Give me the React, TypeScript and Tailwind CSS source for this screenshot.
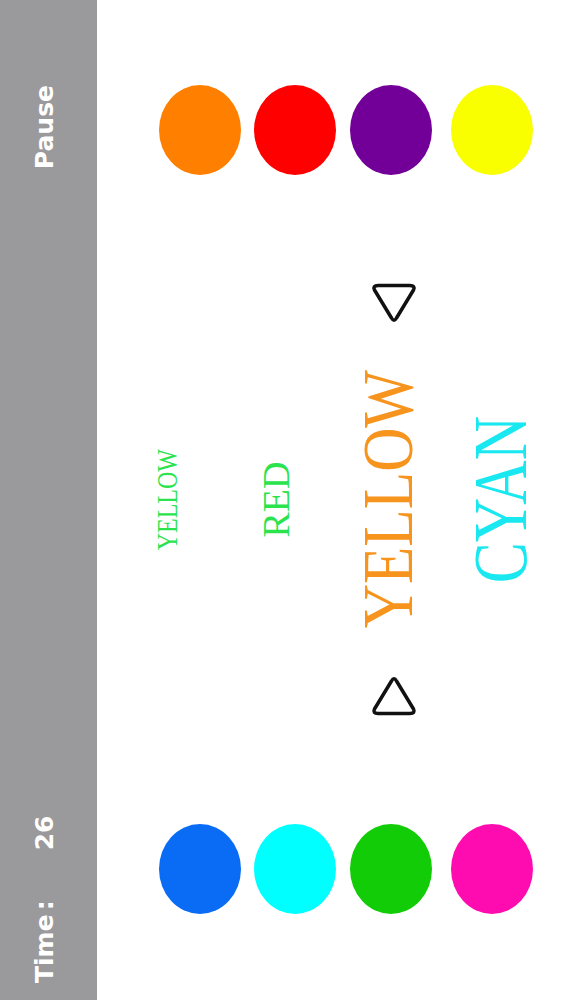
import React from 'react';

// The game is drawn in landscape (1000x563) and turned a quarter turn to fit the portrait window.

const leftDots = [
  { color: 'bg-[#0a6cf5]', mt: 'mt-0' },
  { color: 'bg-[#00ffff]', mt: 'mt-[13px]' },
  { color: 'bg-[#12cc08]', mt: 'mt-[14px]' },
  { color: 'bg-[#ff0cb0]', mt: 'mt-[19px]' },
];

const rightDots = [
  { color: 'bg-[#ff8000]', mt: 'mt-0' },
  { color: 'bg-[#ff0000]', mt: 'mt-[13px]' },
  { color: 'bg-[#720098]', mt: 'mt-[14px]' },
  { color: 'bg-[#faff00]', mt: 'mt-[19px]' },
];

const DotColumn = ({ dots }: { dots: { color: string; mt: string }[] }) => (
  <div className="flex flex-col pt-[62px] w-[90px] flex-shrink-0">
    {dots.map((d, i) => (
      <div key={i} className={`w-[90px] h-[82px] rounded-[50%] ${d.color} ${d.mt}`} />
    ))}
  </div>
);

const Arrow = ({ dir }: { dir: 'right' | 'left' }) => (
  <svg width="42" height="48" viewBox="0 0 42 48" className="mt-[18px] flex-shrink-0">
    <path
      d={
        dir === 'right'
          ? 'M 2.5 8 Q 2.5 2.5 7 4.5 L 35 21.5 Q 39.5 24 35 26.5 L 7 43.5 Q 2.5 45.5 2.5 40 Z'
          : 'M 39.5 8 Q 39.5 2.5 35 4.5 L 7 21.5 Q 2.5 24 7 26.5 L 35 43.5 Q 39.5 45.5 39.5 40 Z'
      }
      fill="none"
      stroke="#111"
      strokeWidth="3.5"
      strokeLinejoin="round"
    />
  </svg>
);

export default function App() {
  return (
    <div className="relative w-[563px] h-[1000px] overflow-hidden bg-white">
      <div className="w-[1000px] h-[563px] origin-top-left [transform:translateY(1000px)_rotate(-90deg)] flex flex-col bg-white">
        {/* Top bar */}
        <div className="h-[97px] flex-shrink-0 bg-[#9a999c] flex items-start pt-[32px] pl-[17px] pr-[85px] text-white font-bold text-[25px] leading-none font-['DejaVu_Sans',sans-serif]">
          <span>Time</span>
          <span className="ml-[4px]">:</span>
          <span className="ml-[50px]">26</span>
          <span className="ml-auto">Pause</span>
        </div>

        {/* Play field */}
        <div className="flex-1 flex pl-[86px] pr-[85px]">
          <DotColumn dots={leftDots} />

          <div className="flex-1 flex flex-col items-center font-['Liberation_Serif',serif] leading-none">
            <span className="mt-[55px] text-[30px] text-[#2be34c] scale-x-[0.8] whitespace-nowrap">YELLOW</span>
            <span className="mt-[75px] text-[38px] text-[#2be34c] whitespace-nowrap">RED</span>
            <div className="mt-[57px] flex items-start gap-[23px]">
              <Arrow dir="right" />
              <span className="text-[72px] text-[#f7941d] scale-x-[0.85] whitespace-nowrap">YELLOW</span>
              <Arrow dir="left" />
            </div>
            <span className="mt-[38px] text-[76px] text-[#1ae8f0] scale-x-[0.81] whitespace-nowrap">CYAN</span>
          </div>

          <DotColumn dots={rightDots} />
        </div>
      </div>
    </div>
  );
}
